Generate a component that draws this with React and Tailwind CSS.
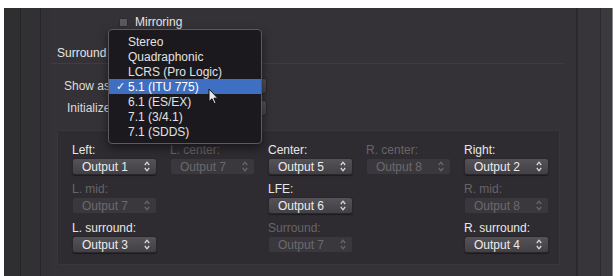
import React from "react";

const font = { fontFamily: '"Liberation Sans", Arial, sans-serif' };

function Arrows({ dim }) {
  const c = dim ? "#6a676c" : "#d8d8d8";
  return (
    <svg width="6" height="11" viewBox="0 0 6 11" className="shrink-0">
      <path d="M0.8 4 L3 1.2 L5.2 4" fill="none" stroke={c} strokeWidth="1.3" />
      <path d="M0.8 7 L3 9.8 L5.2 7" fill="none" stroke={c} strokeWidth="1.3" />
    </svg>
  );
}

function PopBtn({ text, dim }) {
  return (
    <div
      className={
        "mt-[2px] h-[17px] w-[85px] rounded-[3px] border flex items-center justify-between pl-[9px] pr-[6px] text-[12px] leading-none " +
        (dim
          ? "border-[#2e2c30] bg-[#3a383c] text-[#6c696e]"
          : "border-[#29272b] bg-gradient-to-b from-[#555358] to-[#424045] text-[#ececec] shadow-[0_1px_1px_rgba(0,0,0,0.4)]")
      }
    >
      <span>{text}</span>
      <Arrows dim={dim} />
    </div>
  );
}

function Cell({ label, value, dim }) {
  return (
    <div className="flex flex-col">
      <div className={"h-[12px] leading-[12px] text-[12px] " + (dim ? "text-[#67646a]" : "text-[#e8e8e8]")}>
        {label}
      </div>
      <PopBtn text={value} dim={dim} />
    </div>
  );
}

const Empty = () => <div />;

export default function App() {
  const items = [
    "Stereo",
    "Quadraphonic",
    "LCRS (Pro Logic)",
    "5.1 (ITU 775)",
    "6.1 (ES/EX)",
    "7.1 (3/4.1)",
    "7.1 (SDDS)",
  ];
  return (
    <div className="w-[615px] h-[276px] bg-white pt-[8px] pl-[4px] overflow-hidden" style={font}>
      <div className="flex h-[268px] bg-[#353237]">
        {/* left strip */}
        <div className="flex h-full shrink-0">
          <div className="w-[16px] bg-[#2f2e31]" />
          <div className="w-px bg-[#252427]" />
          <div className="w-[19px] bg-[#313033]" />
          <div className="w-px bg-[#272528]" />
          <div className="w-[10px] bg-[#333136]" />
        </div>

        {/* main */}
        <div className="relative w-[525px] shrink-0 flex flex-col">
          <div className="h-[14px] mt-[7px] flex items-center pl-[68px]">
            <div className="w-[9px] h-[9px] rounded-[1px] bg-[#5a585d] border border-[#2c2a2e]" />
            <span className="ml-[7px] text-[12px] text-[#e4e4e4]">Mirroring</span>
          </div>
          <div className="h-[14px] mt-[17px] pl-[6px] flex items-center text-[12px] text-[#e4e4e4]">
            Surround
          </div>
          <div className="mt-[3px] h-px mr-[13px] bg-[#3f3c42]" />

          <div className="mt-[14px] h-[16px] flex items-center pl-[13px]">
            <div className="w-[48px] text-[12px] text-[#dcdcdc]">Show as</div>
            <div className="w-[155px] h-[16px] rounded-[3px] bg-gradient-to-b from-[#545257] to-[#434146] border border-[#29272b]" />
          </div>
          <div className="mt-[6px] h-[16px] flex items-center pl-[16px]">
            <div className="w-[45px] text-[12px] text-[#dcdcdc]">Initialize</div>
            <div className="w-[155px] h-[16px] rounded-[3px] bg-gradient-to-b from-[#545257] to-[#434146] border border-[#29272b]" />
          </div>

          {/* channel box */}
          <div className="mt-[14px] ml-[6px] w-[503px] h-[135px] bg-[#2f2c31] border border-[#3a373c] rounded-[2px] pl-[14px] pt-[13px]">
            <div className="grid grid-cols-[85px_85px_85px_85px_85px] gap-x-[13px] gap-y-[8px]">
              <Cell label="Left:" value="Output 1" />
              <Cell label="L. center:" value="Output 7" dim />
              <Cell label="Center:" value="Output 5" />
              <Cell label="R. center:" value="Output 8" dim />
              <Cell label="Right:" value="Output 2" />

              <Cell label="L. mid:" value="Output 7" dim />
              <Empty />
              <Cell label="LFE:" value="Output 6" />
              <Empty />
              <Cell label="R. mid:" value="Output 8" dim />

              <Cell label="L. surround:" value="Output 3" />
              <Empty />
              <Cell label="Surround:" value="Output 7" dim />
              <Empty />
              <Cell label="R. surround:" value="Output 4" />
            </div>
          </div>

          {/* popup menu */}
          <div className="absolute left-[57px] top-[21px] w-[154px] h-[115px] bg-[#1b191d] border border-[#5b595e] rounded-[4px] pt-[4px] shadow-[0_4px_10px_rgba(0,0,0,0.5)]">
            {items.map((t, i) => (
              <div
                key={t}
                className={
                  "relative h-[15px] flex items-center pl-[19px] text-[12px] leading-none " +
                  (i === 3 ? "bg-[#3e6fc2] text-white" : "text-[#e2e2e2]")
                }
              >
                {i === 3 && <span className="absolute left-[7px] text-[11px]">✓</span>}
                {t}
              </div>
            ))}
          </div>

          {/* cursor */}
          <svg className="absolute left-[157px] top-[80px]" width="11" height="17" viewBox="0 0 11 17">
            <path d="M1 1 L1 13.5 L4 10.8 L6.2 15.6 L8 14.8 L5.9 10.2 L9.8 10.2 Z" fill="#e8e8e8" stroke="#111" strokeWidth="1" strokeLinejoin="round" />
          </svg>
        </div>

        {/* right strip */}
        <div className="flex h-full flex-1">
          <div className="w-[2px] bg-[#2b292c]" />
          <div className="w-[22px] bg-[#38353a]" />
          <div className="w-px bg-[#2c2a2d]" />
          <div className="w-[11px] bg-[#3b393d]" />
          <div className="w-px bg-[#8a888c]" />
          <div className="flex-1 bg-white" />
        </div>
      </div>
    </div>
  );
}
